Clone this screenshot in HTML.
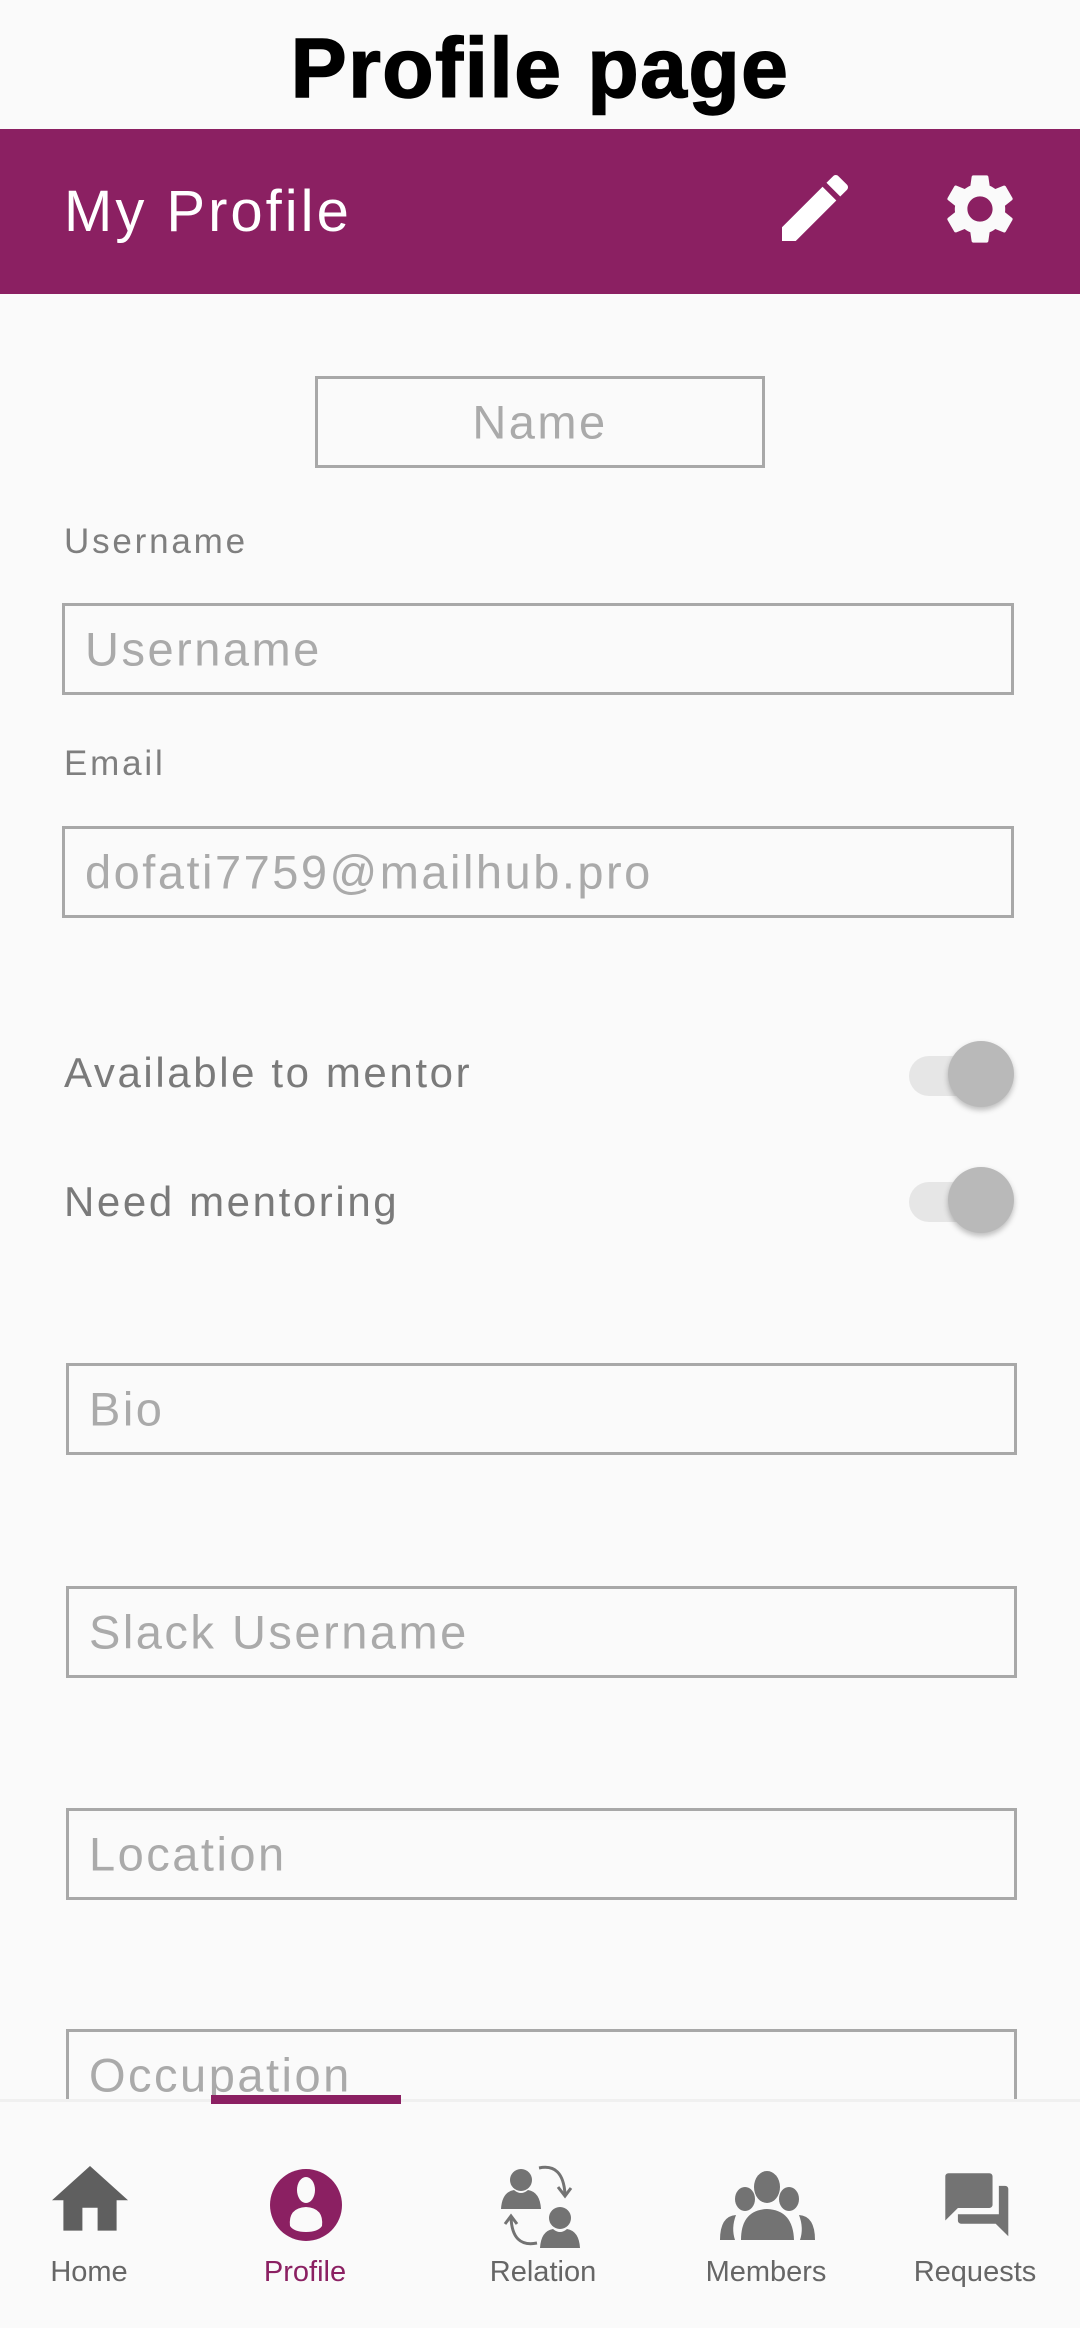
<!DOCTYPE html>
<html><head><meta charset="utf-8"><style>
*{margin:0;padding:0;box-sizing:border-box}
body{width:1080px;height:2328px;background:#fafafa;position:relative;overflow:hidden;font-family:"Liberation Sans",sans-serif}
.a{position:absolute}
.box{position:absolute;border:3px solid #a8a8a8;}
.ph{position:absolute;left:20px;top:50%;transform:translateY(-50%);font-size:47px;color:#aaa;white-space:nowrap;letter-spacing:2.5px}
.lbl{position:absolute;font-size:35px;color:#7f7f7f;letter-spacing:2.8px}
.tl{position:absolute;font-size:42px;color:#7a7a7a;letter-spacing:2.6px}
.nl{position:absolute;top:2256px;font-size:29px;color:#666;width:200px;text-align:center}
</style></head><body>
<div class="a" style="left:0;top:20px;width:1080px;text-align:center;font-size:84px;font-weight:bold;color:#000;letter-spacing:1.5px;-webkit-text-stroke:1.5px #000">Profile page</div>
<div class="a" style="left:0;top:129px;width:1080px;height:165px;background:#8b2062"></div>
<div class="a" style="left:64px;top:178px;font-size:58px;color:#fff;letter-spacing:3px">My Profile</div>
<svg class="a" style="left:771px;top:164px" width="88" height="88" viewBox="0 0 24 24"><path fill="#fff" d="M3 17.25V21h3.75L17.81 9.94l-3.75-3.75L3 17.25zM20.71 7.04c.39-.39.39-1.02 0-1.41l-2.34-2.34c-.39-.39-1.02-.39-1.41 0l-1.83 1.83 3.75 3.75 1.83-1.83z"/></svg>
<svg class="a" style="left:938px;top:167px" width="84" height="84" viewBox="0 0 24 24"><path fill="#fafafa" d="M19.14 12.94c.04-.3.06-.61.06-.94 0-.32-.02-.64-.07-.94l2.03-1.58c.18-.14.23-.41.12-.61l-1.92-3.32c-.12-.22-.37-.29-.59-.22l-2.39.96c-.5-.38-1.03-.7-1.62-.94l-.36-2.540c-.04-.24-.24-.41-.48-.41h-3.84c-.24 0-.43.17-.47.41l-.36 2.54c-.59.24-1.130.57-1.62.94l-2.39-.96c-.22-.08-.47 0-.59.22L2.74 8.87c-.12.21-.08.47.12.61l2.030 1.58c-.05.3-.09.63-.09.94s.02.64.07.94l-2.03 1.58c-.18.14-.23.41-.12.61l1.92 3.32c.12.22.37.29.59.22l2.39-.96c.5.38 1.03.7 1.62.94l.36 2.54c.05.24.24.41.48.41h3.84c.24 0 .44-.17.47-.41l.36-2.54c.59-.24 1.13-.56 1.62-.94l2.39.96c.22.08.47 0 .59-.22l1.92-3.32c.12-.22.07-.47-.12-.61l-2.01-1.58zM12 15.6c-1.98 0-3.6-1.62-3.6-3.6s1.62-3.6 3.6-3.6 3.6 1.62 3.6 3.6-1.62 3.6-3.6 3.6z"/></svg>

<div class="box" style="left:315px;top:376px;width:450px;height:92px"><div class="ph" style="left:0;width:100%;text-align:center">Name</div></div>
<div class="lbl" style="left:64px;top:522px">Username</div>
<div class="box" style="left:62px;top:603px;width:952px;height:92px"><div class="ph">Username</div></div>
<div class="lbl" style="left:64px;top:744px">Email</div>
<div class="box" style="left:62px;top:826px;width:952px;height:92px"><div class="ph">dofati7759@mailhub.pro</div></div>

<div class="tl" style="left:64px;top:1049px">Available to mentor</div>
<div class="a" style="left:909px;top:1056px;width:80px;height:40px;border-radius:20px;background:#e6e6e6"></div>
<div class="a" style="left:948px;top:1041px;width:66px;height:66px;border-radius:50%;background:#b9b9b9;box-shadow:0 3px 6px rgba(0,0,0,.25)"></div>
<div class="tl" style="left:64px;top:1178px">Need mentoring</div>
<div class="a" style="left:909px;top:1182px;width:80px;height:40px;border-radius:20px;background:#e6e6e6"></div>
<div class="a" style="left:948px;top:1167px;width:66px;height:66px;border-radius:50%;background:#b9b9b9;box-shadow:0 3px 6px rgba(0,0,0,.25)"></div>

<div class="box" style="left:66px;top:1363px;width:951px;height:92px"><div class="ph">Bio</div></div>
<div class="box" style="left:66px;top:1586px;width:951px;height:92px"><div class="ph">Slack Username</div></div>
<div class="box" style="left:66px;top:1808px;width:951px;height:92px"><div class="ph">Location</div></div>
<div class="box" style="left:66px;top:2029px;width:951px;height:92px"><div class="ph">Occupation</div></div>

<div class="a" style="left:0;top:2099px;width:1080px;height:229px;background:#fafafa;border-top:3px solid #f0f0f0"></div>
<div class="a" style="left:211px;top:2095px;width:190px;height:9px;background:#8b2062"></div>

<svg class="a" style="left:0;top:0" width="1080" height="2328">
<path transform="translate(44.4 2154.6) scale(3.8)" fill="#5f5f5f" d="M10 20v-6h4v6h5v-8h3L12 3 2 12h3v8z"/>
<circle cx="306" cy="2205" r="36" fill="#8b2062"/>
<ellipse cx="306" cy="2190" rx="9" ry="13" fill="#fafafa"/>
<path d="M290 2226 Q288 2208 306 2207 Q324 2208 322 2226 Q318 2232 306 2232 Q294 2232 290 2226Z" fill="#fafafa"/>
<g fill="#737373">
<circle cx="521" cy="2180" r="11"/>
<path d="M501 2209 Q502 2192 514 2190 Q521 2196 528 2190 Q540 2192 541 2209Z"/>
<circle cx="560" cy="2218" r="11"/>
<path d="M540 2248 Q541 2231 553 2229 Q560 2235 567 2229 Q579 2231 580 2248Z"/>
</g>
<g fill="none" stroke="#737373" stroke-width="3">
<path d="M539 2168 Q563 2163 565 2194"/><path d="M558 2187 L565 2196 L571 2188"/>
<path d="M537 2243 Q512 2248 511 2217"/><path d="M505 2224 L511 2216 L517 2224"/>
</g>
<g fill="#737373">
<ellipse cx="767" cy="2187" rx="13" ry="16"/>
<ellipse cx="745" cy="2199" rx="10" ry="12"/>
<ellipse cx="789" cy="2199" rx="10" ry="12"/>
<path d="M741 2240 Q741 2210 767 2209 Q793 2210 794 2240Z"/>
<path d="M720 2240 Q720 2216 736 2215 Q731 2228 735 2240Z"/>
<path d="M815 2240 Q815 2216 799 2215 Q804 2228 800 2240Z"/>
</g>
<path transform="translate(939 2167) scale(3.15)" fill="#737373" d="M21 6h-2v9H6v2c0 .55.45 1 1 1h11l4 4V7c0-.55-.45-1-1-1zm-4 6V3c0-.55-.45-1-1-1H3c-.55 0-1 .45-1 1v14l4-4h10c.55 0 1-.45 1-1z"/>
</svg>
<div class="nl" style="left:-11px">Home</div>
<div class="nl" style="left:205px;color:#8b2062">Profile</div>
<div class="nl" style="left:443px">Relation</div>
<div class="nl" style="left:666px">Members</div>
<div class="nl" style="left:875px">Requests</div>
</body></html>
